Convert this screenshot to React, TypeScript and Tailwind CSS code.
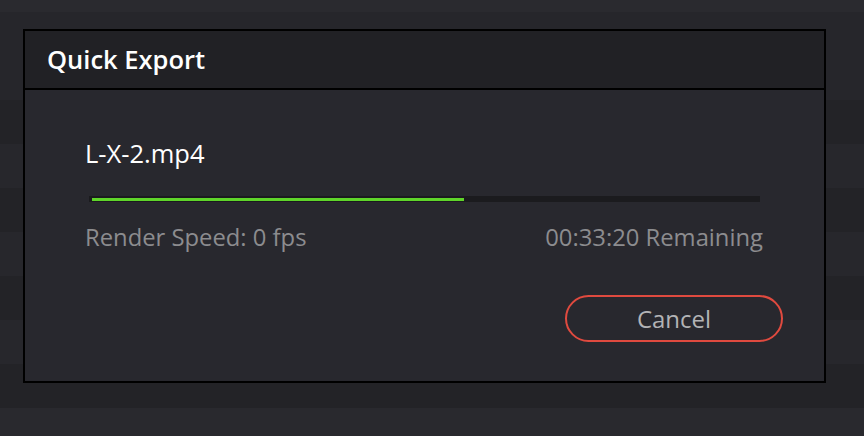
export default function App() {
  const bands = [
    "h-[12px] bg-[#2a2a2f]",
    "h-[88px] bg-[#26262b]",
    "h-[44px] bg-[#232327]",
    "h-[44px] bg-[#27272c]",
    "h-[44px] bg-[#232327]",
    "h-[44px] bg-[#27272c]",
    "h-[44px] bg-[#232327]",
    "h-[44px] bg-[#27272c]",
    "h-[44px] bg-[#232327]",
    "flex-1 bg-[#29292e]",
  ];

  return (
    <div className="relative w-[864px] h-[436px] overflow-hidden font-['Open_Sans',sans-serif]">
      {/* background rows */}
      <div className="flex flex-col h-full">
        {bands.map((b, i) => (
          <div key={i} className={b} />
        ))}
      </div>

      {/* dialog */}
      <div className="absolute left-[23px] top-[29px] w-[803px] h-[354px] border-2 border-black bg-[#28282e] flex flex-col">
        <div className="h-[59px] shrink-0 bg-[#212125] border-b-2 border-black flex items-center px-[22px]">
          <h2 className="text-[25.5px] font-semibold text-white leading-none">Quick Export</h2>
        </div>

        <div className="flex-1 flex flex-col pl-[60px] pr-[61px] pt-[47px]">
          <div className="text-[25.5px] text-white leading-[32px]">L-X-2.mp4</div>

          <div className="mt-[27px] ml-[4px] mr-[3px] h-[6px] bg-[#1b1b1e] flex items-center px-[3px]">
            <div className="h-[3px] w-[372px] bg-[#5fd52a]" />
          </div>

          <div className="mt-[19px] flex justify-between text-[23.8px] text-[#8c8c8f] leading-[32px]">
            <span>Render Speed: 0 fps</span>
            <span>00:33:20 Remaining</span>
          </div>

          <div className="mt-[42px] flex justify-end mr-[-20px]">
            <button className="w-[218px] h-[47px] rounded-full border-2 border-[#e04a3f] text-[24px] text-[#b3b3b5] leading-none">
              Cancel
            </button>
          </div>
        </div>
      </div>
    </div>
  );
}
